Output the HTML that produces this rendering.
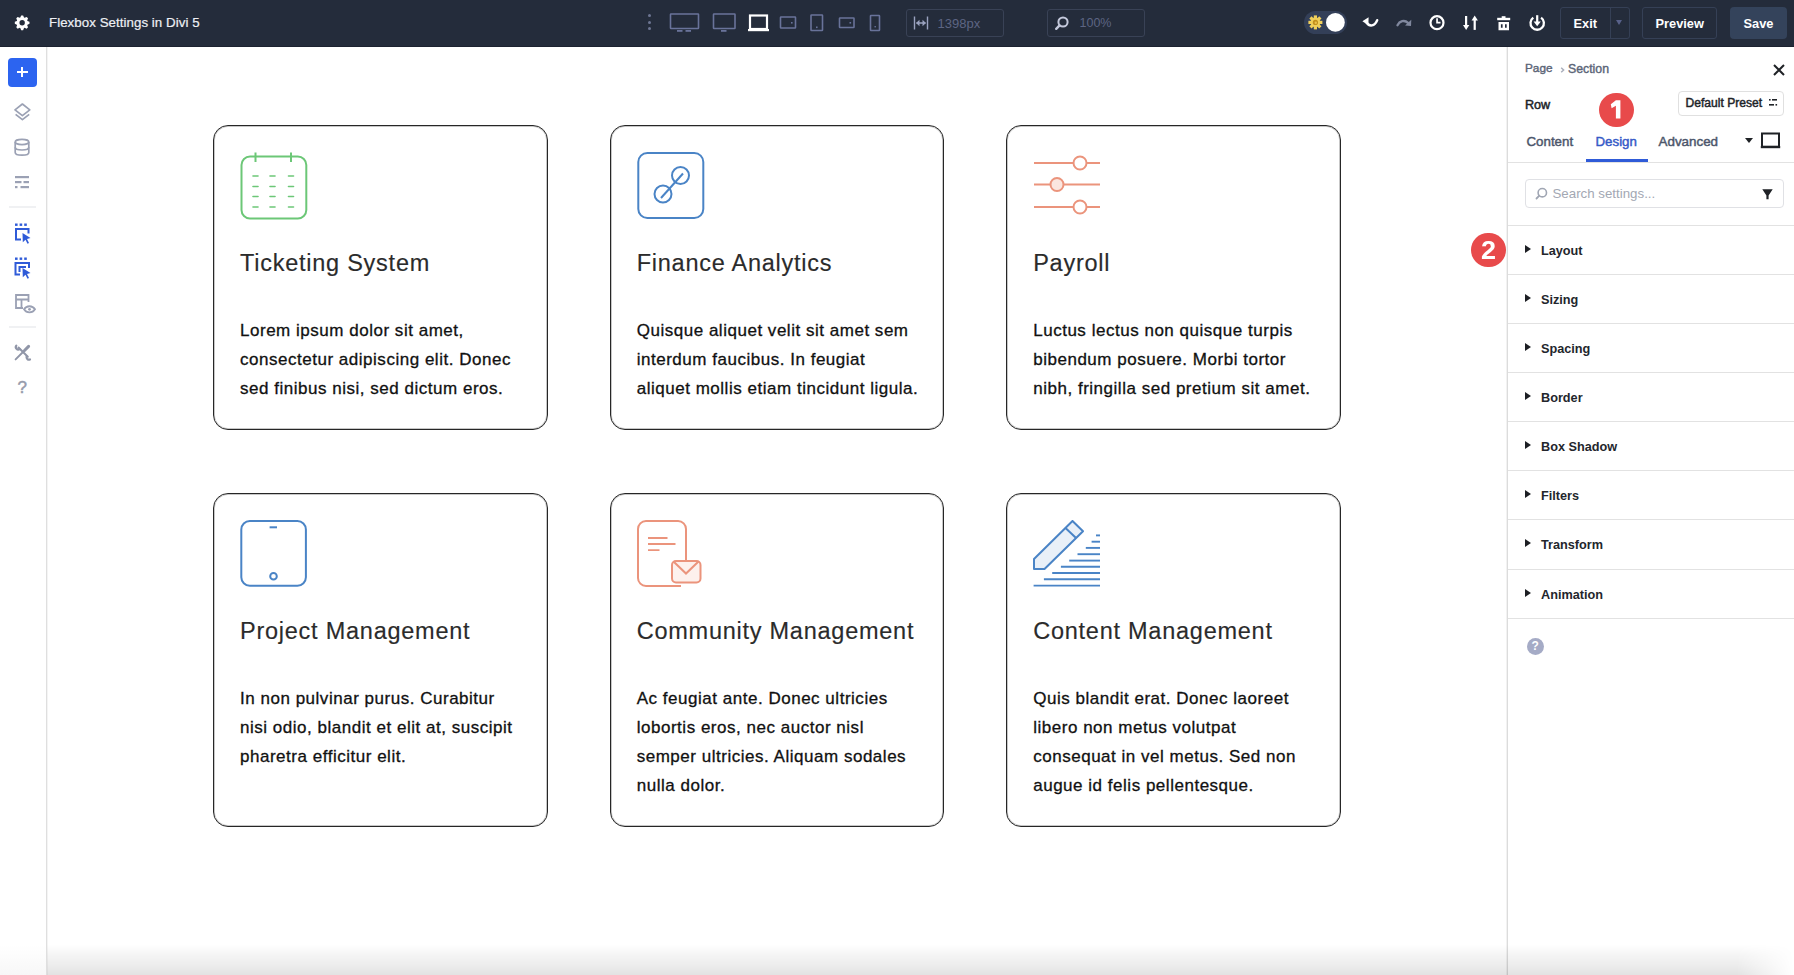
<!DOCTYPE html>
<html><head><meta charset="utf-8">
<style>
*{margin:0;padding:0;box-sizing:border-box}
html,body{width:1794px;height:975px;overflow:hidden;background:#fff;font-family:"Liberation Sans",sans-serif;position:relative}
.abs{position:absolute}
#top{position:absolute;left:0;top:0;width:1794px;height:47px;background:#242c3b;border-bottom:1px solid #1c2230}
#side{position:absolute;left:0;top:47px;width:47px;height:928px;background:#fff;border-right:1px solid #dfdfdf;box-shadow:1px 0 0 #f4f4f4}
#panel{position:absolute;left:1507px;top:47px;width:287px;height:928px;background:#fff;border-left:1px solid #dcdcdc;box-shadow:-1px 0 0 #f2f2f2}
.card{position:absolute;width:335px;border:1.5px solid #262626;border-radius:15px;background:#fff;box-shadow:inset 0 0 0 1px rgba(0,0,0,0.22)}
.card .ic{position:absolute;left:26px;top:26px;width:68px;height:68px}
.card h3{position:absolute;left:26px;top:123px;font-weight:normal;font-size:23.5px;color:#2b2b2b;white-space:nowrap;line-height:28px;letter-spacing:0.75px;-webkit-text-stroke:0.15px #2b2b2b}
.card p{position:absolute;left:26px;top:190.5px;font-size:17px;line-height:29px;color:#111;white-space:nowrap;letter-spacing:0.52px;-webkit-text-stroke:0.3px #111}
.txt{position:absolute;white-space:nowrap;line-height:1}
.sec{position:absolute;left:0;width:287px;height:49px;border-top:1px solid #e2e2e2}
.sec .tri{position:absolute;left:17px;top:19px;width:0;height:0;border-top:4px solid transparent;border-bottom:4px solid transparent;border-left:6px solid #1d1f24}
.sec span{position:absolute;left:33px;top:17px;font-size:12.7px;font-weight:bold;color:#23262c;line-height:16px}
.badge{position:absolute;border-radius:50%;background:#e84a4b;color:#fff;font-weight:bold;text-align:center}
</style></head><body>
<div id="top">
<svg class="abs" style="left:0;top:0" width="46" height="46"><path fill="#fff" fill-rule="evenodd" d="M20.28 17.52L21.19 15.46L23.11 15.46L24.02 17.52L24.56 17.75L26.66 16.93L28.02 18.29L27.20 20.39L27.43 20.93L29.49 21.84L29.49 23.76L27.43 24.67L27.20 25.21L28.02 27.31L26.66 28.67L24.56 27.85L24.02 28.08L23.11 30.14L21.19 30.14L20.28 28.08L19.74 27.85L17.64 28.67L16.28 27.31L17.10 25.21L16.87 24.67L14.81 23.76L14.81 21.84L16.87 20.93L17.10 20.39L16.28 18.29L17.64 16.93L19.74 17.75ZM24.85 22.80A2.7 2.7 0 1 0 19.45 22.80A2.7 2.7 0 1 0 24.85 22.80Z"/></svg>
<div class="txt" style="left:49px;top:16px;font-size:13.3px;color:#eef0f4;letter-spacing:0.05px;-webkit-text-stroke:0.2px #eef0f4">Flexbox Settings in Divi 5</div>
<!-- dots -->
<div class="abs" style="left:648px;top:14px;width:3px;height:3px;border-radius:50%;background:#6d7693"></div>
<div class="abs" style="left:648px;top:21px;width:3px;height:3px;border-radius:50%;background:#6d7693"></div>
<div class="abs" style="left:648px;top:27px;width:3px;height:3px;border-radius:50%;background:#6d7693"></div>
<svg class="abs" style="left:0;top:0" width="900" height="47">
 <g fill="none" stroke="#69739a" stroke-width="1.6">
  <rect x="670.5" y="14" width="28" height="14.5" rx="0.5"/>
  <rect x="713.5" y="14" width="21.5" height="14.5" rx="0.5"/>
  <rect x="780.5" y="17" width="15" height="11" rx="0.5"/>
  <rect x="811" y="15" width="11.5" height="15.5" rx="0.5"/>
  <rect x="839.5" y="18" width="14.5" height="9.5" rx="0.5"/>
  <rect x="870.5" y="15.5" width="9" height="15" rx="0.5"/>
 </g>
 <g fill="#69739a">
  <rect x="677" y="30" width="5.5" height="1.8"/><rect x="685.5" y="30" width="5.5" height="1.8"/>
  <rect x="721" y="30" width="5.5" height="1.8"/>
  <rect x="791" y="22" width="1.6" height="1.6"/>
  <rect x="816" y="26.5" width="1.6" height="1.6"/>
  <rect x="849.5" y="22" width="1.6" height="1.6"/>
  <rect x="874.5" y="26" width="1.4" height="1.4"/>
 </g>
 <g fill="none" stroke="#fff" stroke-width="2.2">
  <rect x="750" y="15.5" width="17" height="13.5"/>
 </g>
 <rect x="748" y="29" width="21" height="2.2" fill="#fff"/>
</svg>
<!-- width box -->
<div class="abs" style="left:906px;top:9px;width:98px;height:28px;border:1px solid #394256;border-radius:3px"></div>
<svg class="abs" style="left:913px;top:16px" width="16" height="14" viewBox="0 0 16 14"><g stroke="#9aa2bf" stroke-width="1.4" fill="none"><path d="M1.5 0.5V13.5M14.5 0.5V13.5M3.5 7H12.5"/></g><path fill="#9aa2bf" d="M3 7L6.5 3.8V10.2Z M13 7L9.5 3.8V10.2Z"/></svg>
<div class="txt" style="left:937.5px;top:17px;font-size:13px;color:#5d6583">1398px</div>
<!-- zoom box -->
<div class="abs" style="left:1047px;top:9px;width:98px;height:28px;border:1px solid #394256;border-radius:3px"></div>
<svg class="abs" style="left:1054px;top:15px" width="16" height="16" viewBox="0 0 16 16"><circle cx="9" cy="7" r="4.6" stroke="#c4c9dc" stroke-width="2" fill="none"/><path d="M5.6 10.4L2.2 13.8" stroke="#c4c9dc" stroke-width="2.4" stroke-linecap="round"/></svg>
<div class="txt" style="left:1079.5px;top:17px;font-size:12.5px;color:#5d6583">100%</div>
<!-- toggle -->
<div class="abs" style="left:1303.5px;top:11px;width:43px;height:23px;border-radius:12px;background:#333f58"></div>
<svg class="abs" style="left:1290px;top:0" width="270" height="46">
 <g transform="translate(25.4 22.4)">
  <g fill="#f0cf5a"><rect x="-1.6" y="-7" width="3.2" height="4" transform="rotate(0)"/><rect x="-1.6" y="-7" width="3.2" height="4" transform="rotate(45)"/><rect x="-1.6" y="-7" width="3.2" height="4" transform="rotate(90)"/><rect x="-1.6" y="-7" width="3.2" height="4" transform="rotate(135)"/><rect x="-1.6" y="-7" width="3.2" height="4" transform="rotate(180)"/><rect x="-1.6" y="-7" width="3.2" height="4" transform="rotate(225)"/><rect x="-1.6" y="-7" width="3.2" height="4" transform="rotate(270)"/><rect x="-1.6" y="-7" width="3.2" height="4" transform="rotate(315)"/></g>
  <circle r="4.8" fill="#f0cf5a"/><circle r="2.6" fill="#c2901c"/><circle cx="0.4" cy="0.3" r="1.2" fill="#e9c04a"/>
 </g>
 <circle cx="45.4" cy="22.4" r="9.4" fill="#fff"/>
 <!-- undo -->
 <path d="M76.5 22.5C79.5 27 84.5 26.5 87.2 20.2" stroke="#fff" stroke-width="2.4" fill="none" stroke-linecap="round"/>
 <path d="M72.4 21.3L78.6 17.2L78.4 25.2Z" fill="#fff"/>
 <!-- redo -->
 <path d="M107.5 25.2C109.5 21 114.5 19.5 118 22.8" stroke="#80889e" stroke-width="2.3" fill="none" stroke-linecap="round"/>
 <path d="M121.3 19.7L121 26L115 25.5Z" fill="#80889e"/>
 <!-- history -->
 <circle cx="147" cy="22.7" r="6.5" stroke="#fff" stroke-width="2.2" fill="none"/>
 <path d="M146.2 18.3V23.5H150.5V21.8H147.9V18.3Z" fill="#fff"/>
 <!-- sort -->
 <g fill="#fff"><rect x="175" y="16" width="2.2" height="10"/><path d="M173 25H179.3L176.1 30Z"/><rect x="183.6" y="19.5" width="2.2" height="10.4"/><path d="M181.6 20.5H187.9L184.7 15.6Z"/></g>
 <!-- trash -->
 <g fill="#fff"><rect x="211.7" y="16.2" width="3.8" height="2"/><rect x="207.2" y="17.8" width="13" height="2.4"/><path d="M208.5 22H219V30.2H208.5Z M210.9 24.3V27.8H212.6V24.3Z M215 24.3V27.8H216.7V24.3Z" fill-rule="evenodd"/></g>
 <!-- power -->
 <path d="M243.3 17.6A6.7 6.7 0 1 0 251.1 17.6" stroke="#fff" stroke-width="2.3" fill="none"/>
 <rect x="246.1" y="15.2" width="2.2" height="7.5" fill="#fff"/><path d="M243.6 21.5H250.8L247.2 26.3Z" fill="#fff"/>
</svg>
<!-- exit -->
<div class="abs" style="left:1560px;top:7px;width:70px;height:32px;border:1px solid #354056;border-radius:3px"></div>
<div class="abs" style="left:1609.5px;top:7px;width:1px;height:32px;background:#354056"></div>
<div class="txt" style="left:1573.5px;top:17.5px;font-size:12.8px;font-weight:bold;color:#fff">Exit</div>
<div class="abs" style="left:1615.5px;top:20px;width:0;height:0;border-left:3.5px solid transparent;border-right:3.5px solid transparent;border-top:5px solid #58618a"></div>
<!-- preview -->
<div class="abs" style="left:1642px;top:7px;width:75px;height:32px;border:1px solid #354056;border-radius:3px"></div>
<div class="txt" style="left:1655.5px;top:17.5px;font-size:12.8px;font-weight:bold;color:#fff">Preview</div>
<!-- save -->
<div class="abs" style="left:1730px;top:7px;width:57px;height:32px;border-radius:4px;background:#34435b"></div>
<div class="txt" style="left:1743.5px;top:17.5px;font-size:12.8px;font-weight:bold;color:#fff">Save</div>
</div>
<div id="side">
<div class="abs" style="left:8px;top:11px;width:29px;height:29px;border-radius:4px;background:#2c64f0"></div>
<div class="abs" style="left:17px;top:24px;width:10.5px;height:2.2px;background:#fff"></div>
<div class="abs" style="left:21.2px;top:19.8px;width:2.2px;height:10.5px;background:#fff"></div>
<svg class="abs" style="left:0;top:0" width="46" height="360">
 <g fill="none" stroke="#9ba1b4" stroke-width="1.7" stroke-linejoin="round">
  <path d="M22.4 57L29.8 62.8L22.4 68.6L15 62.8Z"/>
  <path d="M15.6 67.3L22.4 72.6L29.2 67.3"/>
  <ellipse cx="22" cy="95" rx="6.8" ry="2.6"/>
  <path d="M15.2 95V105.5C15.2 107 18 108.2 22 108.2C26 108.2 28.8 107 28.8 105.5V95"/>
  <path d="M15.2 100.3C15.2 101.8 18 103 22 103C26 103 28.8 101.8 28.8 100.3"/>
 </g>
 <g fill="#9ba1b4">
  <rect x="15" y="129" width="14" height="2.2"/>
  <rect x="15" y="134" width="6.5" height="2.2"/><rect x="23.5" y="134" width="5.5" height="2.2"/>
  <rect x="15" y="139" width="2.5" height="2.2"/><rect x="20.5" y="139" width="8.5" height="2.2"/>
 </g>
 <rect x="9" y="159.5" width="27" height="1" fill="#e2e3e8"/>
 <g fill="#2f5bd8">
<g transform="translate(0 1.5)">  <rect x="15" y="175" width="2.6" height="2.4"/><rect x="19.6" y="175" width="2.6" height="2.4"/><rect x="24.2" y="175" width="2.6" height="2.4"/>
  <path d="M15 179.5H29.5V185H27.5V181.5H17V190H21V192H15Z"/>
  <path d="M22.5 184.5L30.5 189.5L27 190.5L29 194.5L27.5 195.3L25.5 191.3L22.8 193.8Z"/></g>
</g><g fill="#2f5bd8" transform="translate(0 1)">  <rect x="15" y="209.5" width="2.6" height="2.4"/><rect x="19.6" y="209.5" width="2.6" height="2.4"/><rect x="24.2" y="209.5" width="2.6" height="2.4"/>
  <path d="M14.5 214H30V220H28V216H16.5V225.5H20V227.5H14.5Z"/>
  <path d="M18.5 218H26V220H20.5V224H18.5Z"/>
  <path d="M22.5 220L30.5 225L27 226L29 230L27.5 230.8L25.5 226.8L22.8 229.3Z"/>
 </g>
 <g fill="none" stroke="#9ba1b4" stroke-width="1.8">
  <path d="M23 261H16V248H28.5V255"/>
  <path d="M16 252.5H28.5M21.5 252.5V261"/>
  <path d="M24 262.3C26.5 258.2 32.5 258.2 35 262.3C32.5 266.4 26.5 266.4 24 262.3Z"/>
 </g>
 <circle cx="29.5" cy="262.3" r="1.4" fill="#9ba1b4"/>
 <rect x="9" y="279.5" width="27" height="1" fill="#e2e3e8"/>
 <g fill="none" stroke="#9096a8" stroke-linecap="round">
  <path d="M18.5 300.5L27.8 309.8" stroke-width="2"/>
  <path d="M15.6 312.4L23.5 304.5" stroke-width="1.9"/>
  <path d="M24.5 303.5L28.6 299.4" stroke-width="3"/>
  <path d="M16.3 298.6A2.4 2.4 0 0 0 19.6 302" stroke-width="2.2"/>
  <path d="M26.6 309.6A2.4 2.4 0 0 0 30 312.4" stroke-width="2.2"/>
 </g>
</svg>
<div class="txt" style="left:17.5px;top:332px;font-size:17px;color:#979cac;-webkit-text-stroke:0.5px #979cac">?</div>
</div>
<div id="panel">
<div class="txt" style="left:17px;top:16px;font-size:11.8px;color:#5b6577;-webkit-text-stroke:0.4px #5b6577">Page</div>
<svg class="abs" style="left:52px;top:20px" width="6" height="6" viewBox="0 0 6 6"><path d="M1.2 0.8L3.6 3L1.2 5.2" stroke="#a9aebb" stroke-width="1.5" fill="none"/></svg>
<div class="txt" style="left:60px;top:16px;font-size:12.3px;color:#5b6577;-webkit-text-stroke:0.4px #5b6577">Section</div>
<svg class="abs" style="left:265px;top:17px" width="12" height="12" viewBox="0 0 12 12"><path d="M1 1L11 11M11 1L1 11" stroke="#1f2226" stroke-width="2"/></svg>
<div class="txt" style="left:17px;top:51.8px;font-size:12.6px;color:#202328;-webkit-text-stroke:0.5px #202328">Row</div>
<div class="abs" style="left:170px;top:43.5px;width:106px;height:25px;border:1px solid #e0e0e0;border-radius:4px"></div>
<div class="txt" style="left:177.5px;top:49.6px;font-size:12.1px;color:#202328;-webkit-text-stroke:0.45px #202328">Default Preset</div>
<svg class="abs" style="left:260.5px;top:52.2px" width="9" height="8" viewBox="0 0 9 8"><g fill="#202328"><rect x="0" y="0" width="1.6" height="1.6"/><rect x="3" y="0" width="5" height="1.6"/><rect x="0" y="5" width="5" height="1.6"/><rect x="6.5" y="5" width="1.6" height="1.6"/></g></svg>
<div class="txt" style="left:18.5px;top:88.3px;font-size:13.3px;color:#4c566b;-webkit-text-stroke:0.45px #4c566b">Content</div>
<div class="txt" style="left:87.5px;top:88.3px;font-size:13.3px;color:#3559c7;-webkit-text-stroke:0.45px #3559c7">Design</div>
<div class="txt" style="left:150.5px;top:88.3px;font-size:13.4px;color:#4c566b;-webkit-text-stroke:0.45px #4c566b">Advanced</div>
<div class="abs" style="left:237px;top:90.5px;width:0;height:0;border-left:4px solid transparent;border-right:4px solid transparent;border-top:5.5px solid #1f2226"></div>
<svg class="abs" style="left:252px;top:84.5px" width="22" height="18" viewBox="0 0 22 18"><rect x="2" y="1.5" width="17" height="13.2" fill="none" stroke="#1f2226" stroke-width="2"/><rect x="0.8" y="14" width="19.4" height="2.2" fill="#1f2226"/></svg>
<div class="abs" style="left:0;top:114.5px;width:287px;height:1px;background:#e2e2e2"></div>
<div class="abs" style="left:77.5px;top:112px;width:62px;height:3px;background:#2f5bd8"></div>
<div class="abs" style="left:17px;top:132px;width:259px;height:29px;border:1px solid #e0e1e5;border-radius:4px"></div>
<svg class="abs" style="left:27px;top:140px" width="13" height="13" viewBox="0 0 13 13"><circle cx="7.3" cy="5.7" r="4.2" fill="none" stroke="#a0a6b3" stroke-width="1.6"/><path d="M4.3 8.7L1.5 11.5" stroke="#a0a6b3" stroke-width="1.8" stroke-linecap="round"/></svg>
<div class="txt" style="left:44.5px;top:140px;font-size:13.3px;color:#a3a8b3">Search settings...</div>
<svg class="abs" style="left:253.5px;top:141.5px" width="12" height="11" viewBox="0 0 12 11"><path d="M0.3 0.3H10.7L6.6 6.5V10.3H4.4V6.5Z" fill="#1f2226"/></svg>
<div class="sec" style="top:177.50px"><i class="tri"></i><span>Layout</span></div>
<div class="sec" style="top:226.65px"><i class="tri"></i><span>Sizing</span></div>
<div class="sec" style="top:275.80px"><i class="tri"></i><span>Spacing</span></div>
<div class="sec" style="top:324.95px"><i class="tri"></i><span>Border</span></div>
<div class="sec" style="top:374.10px"><i class="tri"></i><span>Box Shadow</span></div>
<div class="sec" style="top:423.25px"><i class="tri"></i><span>Filters</span></div>
<div class="sec" style="top:472.40px"><i class="tri"></i><span>Transform</span></div>
<div class="sec" style="top:521.55px"><i class="tri"></i><span>Animation</span></div>
<div class="abs" style="left:0;top:570.7px;width:287px;height:1px;background:#e2e2e2"></div>
<div class="abs" style="left:19px;top:591px;width:17px;height:17px;border-radius:50%;background:#a5abc6"></div>
<div class="txt" style="left:23.5px;top:593px;font-size:12px;font-weight:bold;color:#fff">?</div>
</div>
<div id="canvas">
<div class="card" style="left:213px;top:124.8px;height:305px"><svg class="ic" viewBox="0 0 68 68"><g fill="none" stroke="#6cc777" stroke-width="2"><rect x="1.5" y="4.5" width="64.8" height="62" rx="8.5"/><path d="M15.5 0.5V10M51 0.5V10"/></g><g stroke="#6cc777" stroke-width="1.6" stroke-linecap="round"><path d="M13.0 24H18.0"/><path d="M30.0 24H35.0"/><path d="M48.5 24H53.5"/><path d="M13.0 34.5H18.0"/><path d="M30.0 34.5H35.0"/><path d="M48.5 34.5H53.5"/><path d="M13.0 44.5H18.0"/><path d="M30.0 44.5H35.0"/><path d="M48.5 44.5H53.5"/><path d="M13.0 55H18.0"/><path d="M30.0 55H35.0"/><path d="M48.5 55H53.5"/></g></svg><h3>Ticketing System</h3><p>Lorem ipsum dolor sit amet,<br>consectetur adipiscing elit. Donec<br>sed finibus nisi, sed dictum eros.</p></div>
<div class="card" style="left:609.7px;top:124.8px;height:305px;width:334px"><svg class="ic" viewBox="0 0 68 68"><g fill="none" stroke="#4a84c6" stroke-width="2"><rect x="1.3" y="1" width="65" height="65" rx="9"/><circle cx="43.5" cy="23.5" r="8.5"/><circle cx="26" cy="42" r="8.5"/><path d="M24 46L46 21.5"/></g></svg><h3>Finance Analytics</h3><p>Quisque aliquet velit sit amet sem<br>interdum faucibus. In feugiat<br>aliquet mollis etiam tincidunt ligula.</p></div>
<div class="card" style="left:1006.2px;top:124.8px;height:305px"><svg class="ic" viewBox="0 0 68 68"><g fill="none" stroke="#eb947c" stroke-width="2"><path d="M1 11H40.5M53.5 11H67M1 32.5H17.5M30.5 32.5H67M1 55H40.5M53.5 55H67"/><circle cx="47" cy="11" r="6.5"/><circle cx="24" cy="32.5" r="6.5" fill="#fbe6df"/><circle cx="47" cy="55" r="6.5"/></g></svg><h3>Payroll</h3><p>Luctus lectus non quisque turpis<br>bibendum posuere. Morbi tortor<br>nibh, fringilla sed pretium sit amet.</p></div>
<div class="card" style="left:213px;top:492.6px;height:334.5px"><svg class="ic" viewBox="0 0 68 68"><g fill="none" stroke="#4a84c6" stroke-width="2"><rect x="1.3" y="1" width="64.6" height="64.8" rx="8.5"/><circle cx="33.5" cy="56.3" r="3.3"/></g><path d="M29.6 7.3H37" stroke="#4a84c6" stroke-width="2"/></svg><h3>Project Management</h3><p>In non pulvinar purus. Curabitur<br>nisi odio, blandit et elit at, suscipit<br>pharetra efficitur elit.</p></div>
<div class="card" style="left:609.7px;top:492.6px;height:334.5px;width:334px"><svg class="ic" viewBox="0 0 68 68"><g fill="none" stroke="#eb947c" stroke-width="2"><path d="M44 66H9A8 8 0 0 1 1 58V9A8 8 0 0 1 9 1H41A8 8 0 0 1 49 9V41"/><rect x="35" y="41" width="28.5" height="21.5" rx="4" fill="#fdf1ed"/><path d="M36.5 41.5L49 53.5L61.5 41.5"/></g><g stroke="#eb947c" stroke-width="1.8"><path d="M11 18H30.5M11 24H38.5M11 30.2H22.5"/></g></svg><h3>Community Management</h3><p>Ac feugiat ante. Donec ultricies<br>lobortis eros, nec auctor nisl<br>semper ultricies. Aliquam sodales<br>nulla dolor.</p></div>
<div class="card" style="left:1006.2px;top:492.6px;height:334.5px"><svg class="ic" viewBox="0 0 68 68"><path d="M1 39L39.5 1L50 11.2L11.5 49H1Z" fill="#e9f0f8"/><g fill="none" stroke="#4a84c6" stroke-width="2" stroke-linejoin="round"><path d="M1 39L39.5 1L50 11.2L11.5 49H1Z"/><path d="M32.5 8L42.8 17.8"/></g><g stroke="#4a84c6" stroke-width="1.9"><path d="M63 15.4H67"/><path d="M58.6 21.7H67"/><path d="M52.8 27.9H67"/><path d="M44.5 34.2H67"/><path d="M36.2 40.6H67"/><path d="M27.9 46.7H67"/><path d="M19.2 53H67"/><path d="M10.9 59.3H67"/><path d="M0.6 65.6H67"/></g></svg><h3>Content Management</h3><p>Quis blandit erat. Donec laoreet<br>libero non metus volutpat<br>consequat in vel metus. Sed non<br>augue id felis pellentesque.</p></div>
</div>
<div class="badge" style="left:1599px;top:92.5px;width:34.6px;height:34.6px"></div>
<svg class="abs" style="left:1599px;top:92px" width="35" height="35" viewBox="1599 92 35 35"><path d="M1615.9 100.2H1620.4V118.4H1615.9V105.8L1611.6 108.2L1610.8 104.3Z" fill="#fff"/></svg>
<div class="badge" style="left:1471.3px;top:232.6px;width:34.6px;height:34.8px"></div>
<div class="txt" style="left:1481.3px;top:237.8px;font-size:25.5px;font-weight:bold;color:#fff;transform:scaleX(1.06);transform-origin:left top">2</div>
<div id="shade" style="position:absolute;left:47px;top:944px;width:1747px;height:31px;background:linear-gradient(to bottom,rgba(0,0,0,0) 0%,rgba(0,0,0,0.035) 30%,rgba(0,0,0,0.07) 65%,rgba(0,0,0,0.11) 100%);-webkit-mask-image:linear-gradient(to right,#000 0,#000 1690px,transparent 1747px)"></div>
<div style="position:absolute;left:0;top:944px;width:46px;height:31px;background:linear-gradient(to bottom,rgba(0,0,0,0) 0%,rgba(0,0,0,0.03) 100%)"></div>
</body></html>
